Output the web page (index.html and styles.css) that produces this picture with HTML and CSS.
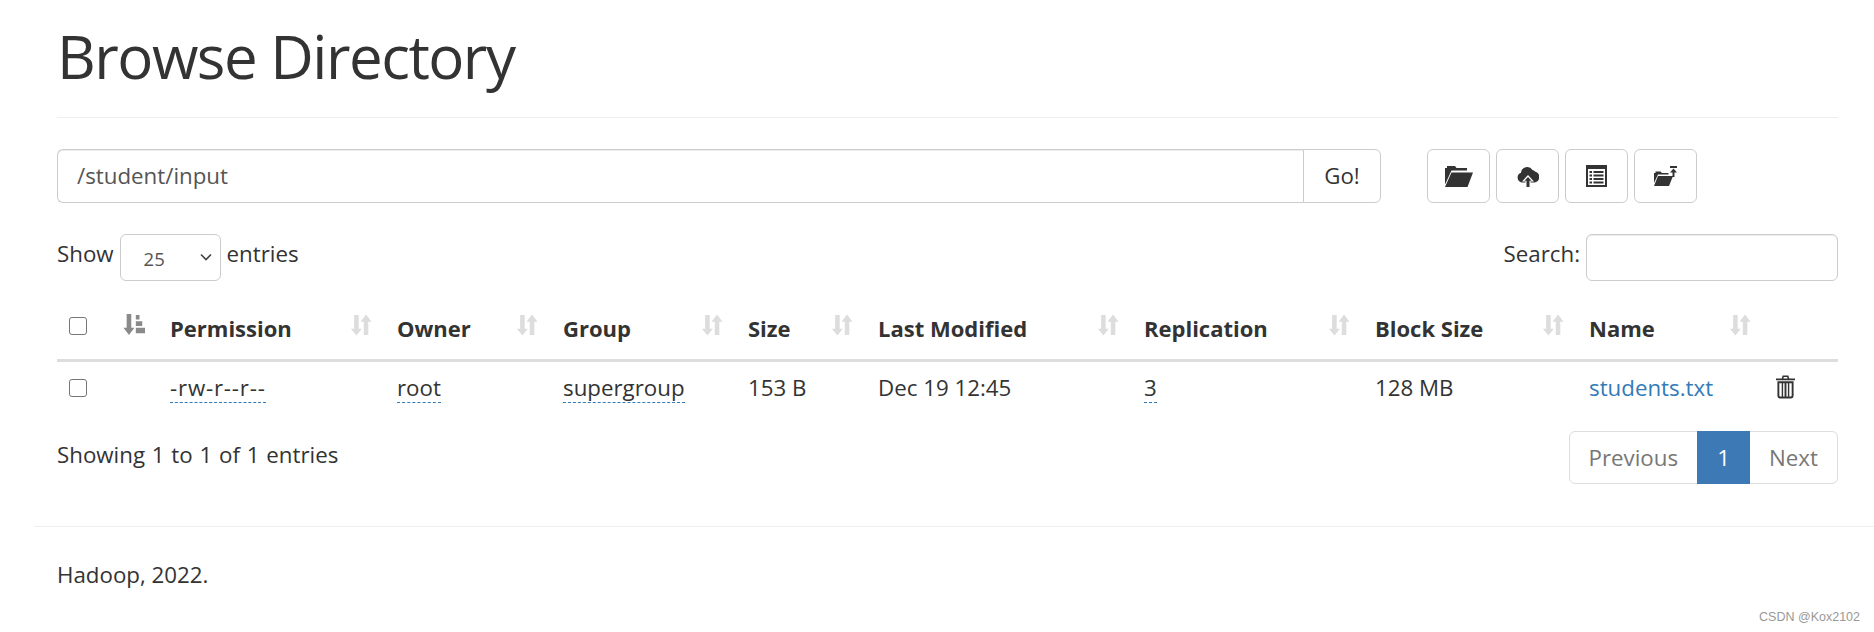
FILE: index.html
```html
<!DOCTYPE html>
<html lang="en">
    <head>
        <meta charset="UTF-8" />
        <title>Browsing HDFS</title>
        <link rel="stylesheet" href="styles.css">
    </head>
    <body>
        <div class="container">
            <div class="page-header">
                <h1>Browse Directory</h1>
            </div>

            <div class="toolbar">
                <div class="input-group">
                    <input class="path-input" type="text" value="/student/input" />
                    <button class="go-btn">Go!</button>
                </div>
                <div class="btn-group">
                    <button class="btn" title="Create directory">
                        <svg class="icon-folder" viewBox="0 0 28 22"><path d="M0 19.500V3h2V1h8l1.500 2H22v2.500H6.500zM6.500 7.500H28L22.500 22H0z" fill="#333"/></svg>
                    </button>
                    <button class="btn" title="Upload">
                        <svg class="icon-upload" viewBox="0 0 22 22">
                            <path d="M5 17.500a5 5 0 0 1-1-9.700A6.200 6.200 0 0 1 15.500 5 4.500 4.500 0 0 1 18 6.500a5.600 5.600 0 0 1-.5 11z" fill="#333"/>
                            <path d="M5 16.500 11 10l6 6.500h-3.500V22h-5v-5.500z" fill="#fff"/>
                            <path d="M7.500 15.700 11 12l3.500 3.700H12.500V22h-3v-6.300z" fill="#333"/>
                        </svg>
                    </button>
                    <button class="btn" title="Cut">
                        <svg class="icon-table" viewBox="0 0 21 22"><path fill-rule="evenodd" d="M0 0h21v22H0zM2 4v16h17V4zM3.500 6H6v2H3.500zM7.500 6h10v2h-10zM3.500 9.500H6v2H3.500zM7.500 9.500h10v2h-10zM3.500 13H6v2H3.500zM7.500 13h10v2h-10zM3.500 16.500H6v2H3.500zM7.500 16.500h10v2h-10z" fill="#333"/></svg>
                    </button>
                    <button class="btn" title="Paste">
                        <svg class="icon-paste" viewBox="0 0 23 20"><path d="M0 17V7h1.500V5.500h5L8 7h6.500v1.500H4zM4 10h15l-4 10H0zM16 0h7v2h-7zM19.500 2.500l3.500 4h-2.500V11h-2V6.500H16z" fill="#333"/></svg>
                    </button>
                </div>
            </div>

            <div class="table-top">
                <label class="length-label">
                    Show
                    <span class="fake-select">25<svg class="chevron" viewBox="0 0 12 8"><path d="M1 1.500l5 5 5-5" fill="none" stroke="#444" stroke-width="1.600"/></svg></span>
                    entries
                </label>
                <label class="search-label">
                    Search:
                    <input class="search-input" type="text" />
                </label>
            </div>

            <table class="file-table">
                <colgroup>
                    <col class="col-check" />
                    <col class="col-perm" />
                    <col class="col-owner" />
                    <col class="col-group" />
                    <col class="col-size" />
                    <col class="col-date" />
                    <col class="col-repl" />
                    <col class="col-block" />
                    <col class="col-name" />
                    <col class="col-del" />
                </colgroup>
                <thead>
                    <tr>
                        <th>
                            <div class="th-inner th-check">
                                <input class="check" type="checkbox" />
                                <svg class="sort-icon" viewBox="0 0 24 24"><path d="M4 0h5v15h3.500L6.500 23 .5 15H4zM14 1h4v5h-4zM14 8h7v5h-7zM14 15h10v6H14z" fill="#8a8a8a"/></svg>
                            </div>
                        </th>
                        <th><div class="th-inner">Permission<svg class="sort-icon" viewBox="0 0 24 24"><path d="M4.500 1h5v15H13l-6 7.500L1 16h3.500zM15 8.500h-3.500L17.500.5l6 8H20V23h-5z" fill="#ddd"/></svg></div></th>
                        <th><div class="th-inner">Owner<svg class="sort-icon" viewBox="0 0 24 24"><path d="M4.500 1h5v15H13l-6 7.500L1 16h3.500zM15 8.500h-3.500L17.500.5l6 8H20V23h-5z" fill="#ddd"/></svg></div></th>
                        <th><div class="th-inner">Group<svg class="sort-icon" viewBox="0 0 24 24"><path d="M4.500 1h5v15H13l-6 7.500L1 16h3.500zM15 8.500h-3.500L17.500.5l6 8H20V23h-5z" fill="#ddd"/></svg></div></th>
                        <th><div class="th-inner">Size<svg class="sort-icon" viewBox="0 0 24 24"><path d="M4.500 1h5v15H13l-6 7.500L1 16h3.500zM15 8.500h-3.500L17.500.5l6 8H20V23h-5z" fill="#ddd"/></svg></div></th>
                        <th><div class="th-inner">Last Modified<svg class="sort-icon" viewBox="0 0 24 24"><path d="M4.500 1h5v15H13l-6 7.500L1 16h3.500zM15 8.500h-3.500L17.500.5l6 8H20V23h-5z" fill="#ddd"/></svg></div></th>
                        <th><div class="th-inner">Replication<svg class="sort-icon" viewBox="0 0 24 24"><path d="M4.500 1h5v15H13l-6 7.500L1 16h3.500zM15 8.500h-3.500L17.500.5l6 8H20V23h-5z" fill="#ddd"/></svg></div></th>
                        <th><div class="th-inner">Block Size<svg class="sort-icon" viewBox="0 0 24 24"><path d="M4.500 1h5v15H13l-6 7.500L1 16h3.500zM15 8.500h-3.500L17.500.5l6 8H20V23h-5z" fill="#ddd"/></svg></div></th>
                        <th><div class="th-inner">Name<svg class="sort-icon" viewBox="0 0 24 24"><path d="M4.500 1h5v15H13l-6 7.500L1 16h3.500zM15 8.500h-3.500L17.500.5l6 8H20V23h-5z" fill="#ddd"/></svg></div></th>
                        <th></th>
                    </tr>
                </thead>
                <tbody>
                    <tr>
                        <td><input class="check" type="checkbox" /></td>
                        <td><span class="explore perm-text">-rw-r--r--</span></td>
                        <td><span class="explore">root</span></td>
                        <td><span class="explore">supergroup</span></td>
                        <td>153 B</td>
                        <td>Dec 19 12:45</td>
                        <td><span class="explore">3</span></td>
                        <td>128 MB</td>
                        <td><a class="file-link" href="#">students.txt</a></td>
                        <td>
                            <svg class="trash" viewBox="0 0 20 24"><path fill-rule="evenodd" d="M7 0h6l1 3h6v2H0V3h6zM8.200 1.500 7.800 3h4.400l-.4-1.500zM1.500 6h17v15.500a2.500 2.500 0 0 1-2.500 2.500H4a2.500 2.500 0 0 1-2.500-2.500zM3.500 8v13a1 1 0 0 0 1 1h1.500V8zM7.500 8v14h1.500V8zM11 8v14h1.500V8zM14 8v14h1.500a1 1 0 0 0 1-1V8z" fill="#333"/></svg>
                        </td>
                    </tr>
                </tbody>
            </table>

            <div class="table-bottom">
                <div class="info">Showing 1 to 1 of 1 entries</div>
                <ul class="pagination">
                    <li class="page-item">Previous</li>
                    <li class="page-item active">1</li>
                    <li class="page-item">Next</li>
                </ul>
            </div>
        </div>

        <hr class="footer-rule" />
        <div class="footer">
            <p>Hadoop, 2022.</p>
            <span class="watermark">CSDN @Kox2102</span>
        </div>
    </body>
</html>
```

FILE: styles.css
```css
* {
    box-sizing: border-box;
}

html,
body {
    height: 100%;
}

body {
    margin: 0;
    background-color: #fff;
    color: #333;
    font-family: "Open Sans", "Noto Sans", sans-serif;
    font-size: 22.3px;
    line-height: 30px;
    overflow: hidden;
}

.container {
    padding: 0 36px 0 57px;
}

/* 제목 */
.page-header {
    height: 118px;
    padding-top: 17px;
    border-bottom: 1px solid #eee;
}

.page-header h1 {
    margin: 0;
    font-size: 60px;
    font-weight: 400;
    line-height: 78px;
    letter-spacing: -1.500px;
}

/* 경로 입력 */
.toolbar {
    display: flex;
    margin-top: 31px;
    height: 54px;
}

.input-group {
    display: flex;
    width: 1324px;
}

.path-input {
    flex: 1;
    min-width: 0;
    height: 54px;
    padding: 0 19px 2px;
    border: 1px solid #ccc;
    border-right: none;
    border-radius: 6px 0 0 6px;
    box-shadow: inset 0 1px 1px rgba(0, 0, 0, 0.075);
    color: #555;
    font: inherit;
}

.go-btn {
    width: 78px;
    height: 54px;
    padding: 0;
    border: 1px solid #ccc;
    border-radius: 0 6px 6px 0;
    background-color: #fff;
    color: #333;
    font: inherit;
}

.btn-group {
    display: flex;
    gap: 6px;
    margin-left: 46px;
}

.btn {
    display: flex;
    align-items: center;
    justify-content: center;
    width: 63px;
    height: 54px;
    padding: 0;
    border: 1px solid #ccc;
    border-radius: 6px;
    background-color: #fff;
}

.icon-folder {
    width: 28px;
    height: 22px;
}

.icon-upload {
    width: 22px;
    height: 22px;
}

.icon-table {
    width: 21px;
    height: 22px;
}

.icon-paste {
    width: 23px;
    height: 20px;
}

/* 표 위쪽 */
.table-top {
    display: flex;
    justify-content: space-between;
    margin-top: 31px;
    height: 47px;
}

.length-label,
.search-label {
    display: flex;
    align-items: center;
    gap: 6px;
    height: 40px;
}

.fake-select {
    position: relative;
    display: flex;
    align-items: center;
    width: 101px;
    height: 47px;
    margin-top: 7px;
    padding: 3px 0 0 23px;
    border: 1px solid #ccc;
    border-radius: 6px;
    color: #555;
    font-size: 18.500px;
}

.chevron {
    position: absolute;
    right: 8px;
    top: 18px;
    width: 12px;
    height: 8px;
}

.search-input {
    width: 252px;
    height: 47px;
    margin-top: 7px;
    border: 1px solid #ccc;
    border-radius: 6px;
    box-shadow: inset 0 1px 1px rgba(0, 0, 0, 0.075);
}

/* 표 */
.file-table {
    width: 1781px;
    margin-top: 0;
    border-collapse: collapse;
    table-layout: fixed;
}

.col-check { width: 101px; }
.col-perm { width: 227px; }
.col-owner { width: 166px; }
.col-group { width: 185px; }
.col-size { width: 130px; }
.col-date { width: 266px; }
.col-repl { width: 231px; }
.col-block { width: 214px; }
.col-name { width: 187px; }
.col-del { width: 74px; }

.file-table th {
    height: 79px;
    padding: 32px 13px 0 12px;
    border-bottom: 3px solid #ddd;
    font-size: 22px;
    font-weight: 700;
    text-align: left;
    vertical-align: top;
}

.th-inner {
    display: flex;
    align-items: center;
    justify-content: space-between;
    height: 30px;
    white-space: nowrap;
}

.sort-icon {
    width: 22px;
    height: 24px;
    margin-top: -6px;
}

.file-table td {
    height: 59px;
    padding: 0 12px 4px;
    vertical-align: middle;
}

.check {
    display: block;
    width: 18px;
    height: 18px;
    margin: 0;
    appearance: none;
    border: 1.500px solid #767676;
    border-radius: 3px;
    background-color: #fff;
}

.th-check .check {
    margin-top: -4px;
}

.explore {
    display: inline-block;
    line-height: 29px;
    border-bottom: 1px dashed #337ab7;
}

.perm-text {
    letter-spacing: 0.800px;
}

.file-link {
    color: #337ab7;
    text-decoration: none;
}

.trash {
    display: block;
    width: 19px;
    height: 24px;
    margin-top: -2px;
}

/* 표 아래쪽 */
.table-bottom {
    display: flex;
    justify-content: space-between;
    margin-top: 12px;
}

.info {
    margin-top: 9px;
    word-spacing: 1px;
}

.pagination {
    display: flex;
    margin: 0;
    padding: 0;
    list-style: none;
    border: 1px solid #ddd;
    border-radius: 6px;
    height: 53px;
    color: #777;
}

.page-item {
    padding: 0 19px;
    line-height: 51px;
}

.page-item.active {
    margin: -1px 0;
    width: 53px;
    padding: 0;
    background-color: #3c79b5;
    color: #fff;
    line-height: 53px;
    text-align: center;
}

/* 바닥글 */
.footer-rule {
    margin: 42px 0 0 34px;
    border: none;
    border-top: 1px solid #eee;
}

.footer {
    padding: 33px 36px 0 57px;
}

.footer p {
    margin: 0;
}

.watermark {
    position: absolute;
    right: 14px;
    bottom: 7px;
    color: #999;
    font-family: "Liberation Sans", sans-serif;
    font-size: 12.500px;
    line-height: 16px;
}
```
